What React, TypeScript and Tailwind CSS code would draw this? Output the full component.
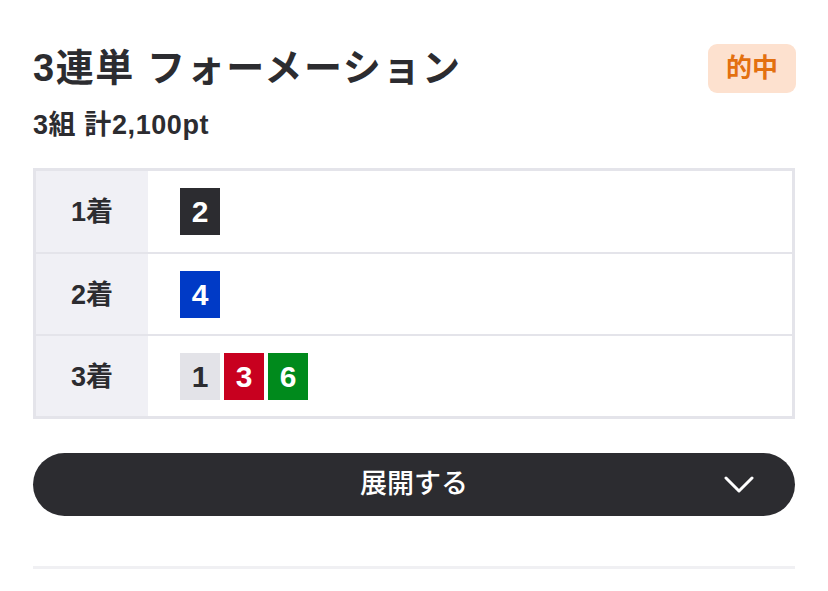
import React from "react";

type Pick = { n: number; bg: string; fg: string };

const rows: { label: string; picks: Pick[] }[] = [
  { label: "1着", picks: [{ n: 2, bg: "bg-[#2c2c30]", fg: "text-white" }] },
  { label: "2着", picks: [{ n: 4, bg: "bg-[#003ac6]", fg: "text-white" }] },
  {
    label: "3着",
    picks: [
      { n: 1, bg: "bg-[#e3e3e8]", fg: "text-[#2c2c30]" },
      { n: 3, bg: "bg-[#c8001f]", fg: "text-white" },
      { n: 6, bg: "bg-[#008a1c]", fg: "text-white" },
    ],
  },
];

const font = {
  fontFamily: '"Liberation Sans", "Noto Sans CJK JP", sans-serif',
};

export default function App() {
  return (
    <div className="min-h-[591px] w-[828px] bg-white text-[#2c2c30]" style={font}>
      <div className="px-[33px] pt-[44px]">
        <div className="flex items-start justify-between">
          <div>
            <h1 className="text-[38px] font-bold leading-[48px] tracking-[1.6px]">
              3連単 フォーメーション
            </h1>
            <p className="mt-[17px] text-[27px] font-bold leading-[32px] tracking-[0.6px]">
              3組 計2,100pt
            </p>
          </div>
          <span className="mr-[-1px] flex h-[49px] w-[88px] items-center justify-center rounded-[9px] bg-[#fde1cf] text-[26px] font-semibold text-[#e3700f]">
            的中
          </span>
        </div>

        <div className="mt-[27px] border-[3px] border-[#e4e4ea]">
          {rows.map((row, i) => (
            <div
              key={row.label}
              className={`grid grid-cols-[112px_1fr] ${
                i > 0 ? "h-[82px] border-t-2 border-[#e4e4ea]" : "h-[81px]"
              }`}
            >
              <div className="flex items-center justify-center bg-[#f0f0f5] pt-[2px] text-[27px] font-bold">
                {row.label}
              </div>
              <div className="flex items-center gap-[4px] pl-[32px]">
                {row.picks.map((p) => (
                  <span
                    key={p.n}
                    className={`flex h-[47px] w-[40px] items-center justify-center text-[30px] font-bold ${p.bg} ${p.fg}`}
                  >
                    {p.n}
                  </span>
                ))}
              </div>
            </div>
          ))}
        </div>

        <button className="relative mt-[34px] flex h-[63px] w-full items-center justify-center rounded-full bg-[#2c2c30] text-[27px] font-medium text-white">
          展開する
          <svg
            className="absolute right-[41px] top-1/2 -translate-y-1/2"
            width="30"
            height="18"
            viewBox="0 0 30 18"
            fill="none"
          >
            <polyline
              points="2,2 15,15 28,2"
              stroke="white"
              strokeWidth="3"
              strokeLinecap="round"
              strokeLinejoin="round"
            />
          </svg>
        </button>

        <div className="mt-[50px] h-[3px] w-full bg-[#f0f0f3]" />
      </div>
    </div>
  );
}
